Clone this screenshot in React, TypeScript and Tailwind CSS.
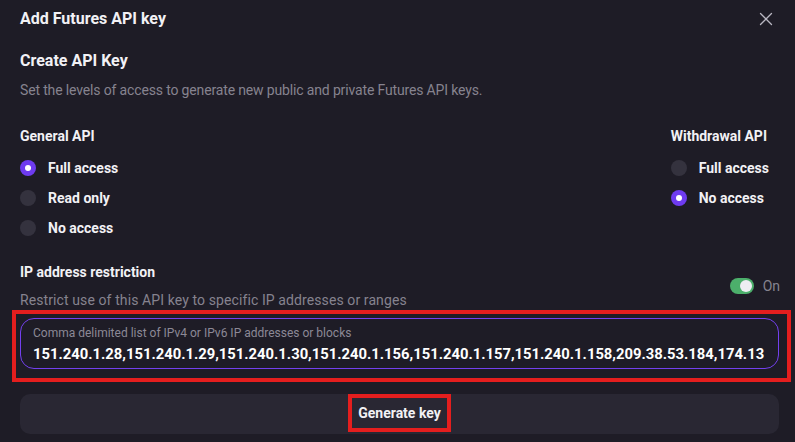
import { X } from "lucide-react";

type Option = { label: string; checked?: boolean };

function Radio({ label, checked }: Option) {
  return (
    <div className="flex h-[30px] items-center gap-3">
      <span
        className={
          checked
            ? "flex h-4 w-4 items-center justify-center rounded-full bg-[#6e3bf0]"
            : "h-4 w-4 rounded-full bg-[#34323e]"
        }
      >
        {checked && <span className="h-1.5 w-1.5 rounded-full bg-white" />}
      </span>
      <span className="text-[14px] font-bold text-[#f2f1f5]">{label}</span>
    </div>
  );
}

const general: Option[] = [
  { label: "Full access", checked: true },
  { label: "Read only" },
  { label: "No access" },
];

const withdrawal: Option[] = [
  { label: "Full access" },
  { label: "No access", checked: true },
];

const ips =
  "151.240.1.28,151.240.1.29,151.240.1.30,151.240.1.156,151.240.1.157,151.240.1.158,209.38.53.184,174.13";

export default function App() {
  return (
    <div
      className="flex h-[442px] w-[795px] flex-col overflow-hidden bg-[#1e1c26] text-[#f2f1f5]"
      style={{ fontFamily: "Roboto, 'Noto Sans', sans-serif" }}
    >
      {/* Header */}
      <div className="flex h-[38px] shrink-0 items-center justify-between pl-5 pr-[18px]">
        <h1 className="text-[16px] font-bold leading-none">Add Futures API key</h1>
        <X size={22} strokeWidth={1.4} className="text-[#b9b7c2]" />
      </div>

      <div className="px-5">
        <h2 className="mt-[13px] text-[16px] font-bold leading-5">Create API Key</h2>
        <p className="mt-[9px] text-[14px] leading-5 tracking-[-0.15px] text-[#86838f]">
          Set the levels of access to generate new public and private Futures API keys.
        </p>

        {/* Access levels */}
        <div className="mt-[26px] flex justify-between pr-[6px]">
          <div>
            <div className="text-[14px] font-bold leading-5">General API</div>
            <div className="mt-[7px]">
              {general.map((o) => (
                <Radio key={o.label} {...o} />
              ))}
            </div>
          </div>
          <div>
            <div className="text-[14px] font-bold leading-5">Withdrawal API</div>
            <div className="mt-[7px]">
              {withdrawal.map((o) => (
                <Radio key={o.label} {...o} />
              ))}
            </div>
          </div>
        </div>

        {/* IP restriction */}
        <div className="-mr-[5px] mt-[19px] flex items-center justify-between">
          <div>
            <div className="text-[14px] font-bold leading-5">IP address restriction</div>
            <p className="mt-2 text-[14px] leading-5 tracking-[0.1px] text-[#86838f]">
              Restrict use of this API key to specific IP addresses or ranges
            </p>
          </div>
          <div className="flex items-center gap-[9px]">
            <span className="flex h-4 w-6 items-center justify-end rounded-full bg-[#4caf6b] px-[2px]">
              <span className="h-3 w-3 rounded-full bg-[#eeedf2]" />
            </span>
            <span className="text-[14px] text-[#86838f]">On</span>
          </div>
        </div>
      </div>

      {/* Input (highlighted) */}
      <div className="ml-3 mr-1 h-[72px] shrink-0 border-4 border-[#e41e1e] pl-1 pr-2 pt-1">
        <div className="h-[51px] overflow-hidden rounded-[14px] border-[1.5px] border-[#7340ee] px-3 pt-[6px]">
          <div className="text-[12px] leading-4 text-[#8c8996]">
            Comma delimited list of IPv4 or IPv6 IP addresses or blocks
          </div>
          <div className="mt-[3px] whitespace-nowrap text-[14.8px] font-bold leading-5 text-white">
            {ips}
          </div>
        </div>
      </div>

      {/* Action */}
      <div className="ml-5 mr-4 mt-3 flex h-10 shrink-0 items-start justify-center rounded-[10px] bg-[#292733]">
        <span className="flex h-[38px] items-center border-4 border-[#e41e1e] px-[6px] text-[14px] font-bold text-[#f2f1f5]">
          Generate key
        </span>
      </div>
    </div>
  );
}
